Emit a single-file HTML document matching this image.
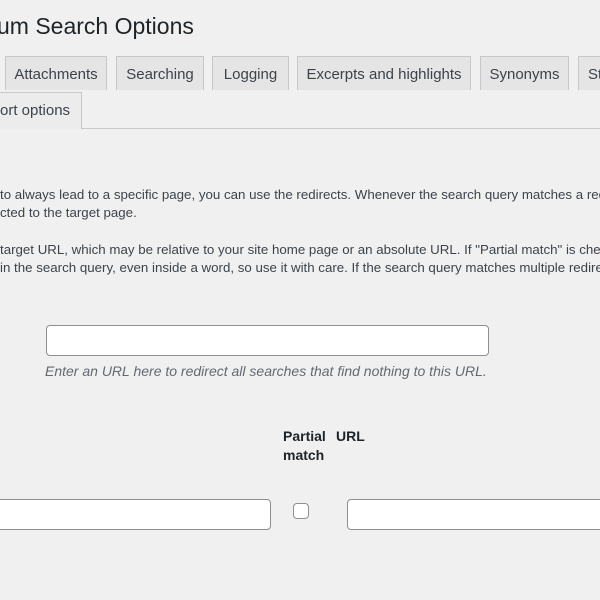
<!DOCTYPE html>
<html><head><meta charset="utf-8"><style>
body{margin:0;width:600px;height:600px;overflow:hidden;background:#f0f0f1;font-family:"Liberation Sans",sans-serif;color:#1d2327;position:relative}
.a{position:absolute;white-space:nowrap}
h1{position:absolute;left:-3px;top:13px;margin:0;font-weight:400;font-size:23px;white-space:nowrap}
.tab{position:absolute;height:34px;background:#e5e5e6;border:1px solid #c8c8ca;border-bottom:none;font-size:15px;line-height:36px;text-align:center;color:#3c434a;box-sizing:border-box}
.p{font-size:13.3px;color:#3c434a}
.in{position:absolute;background:#fff;border:1px solid #8c8f94;border-radius:4px;box-sizing:border-box}
</style></head><body>
<h1>um Search Options</h1>
<div class="tab" style="left:5px;top:56px;width:102px">Attachments</div>
<div class="tab" style="left:116px;top:56px;width:88px">Searching</div>
<div class="tab" style="left:212px;top:56px;width:77px">Logging</div>
<div class="tab" style="left:297px;top:56px;width:174px">Excerpts and highlights</div>
<div class="tab" style="left:480px;top:56px;width:89px">Synonyms</div>
<div class="tab" style="left:578px;top:56px;width:40px;text-align:left;padding-left:9px">St</div>
<div class="tab" style="left:-10px;top:92px;width:92px;height:37px;background:#ececed;text-align:left;padding-left:9px">ort options</div>
<div class="a" style="left:82px;top:128px;width:520px;height:1px;background:#c8c8ca"></div>
<div class="a p" style="left:0;top:187px">to always lead to a specific page, you can use the redirects. Whenever the search query matches a redi</div>
<div class="a p" style="left:0;top:205px">cted to the target page.</div>
<div class="a p" style="left:0;top:242px">target URL, which may be relative to your site home page or an absolute URL. If "Partial match" is chec</div>
<div class="a p" style="left:0;top:260px">in the search query, even inside a word, so use it with care. If the search query matches multiple redire</div>
<div class="in" style="left:46px;top:325px;width:443px;height:31px"></div>
<div class="a" style="left:45px;top:363px;font-size:14px;font-style:italic;color:#646970">Enter an URL here to redirect all searches that find nothing to this URL.</div>
<div class="a" style="left:283px;top:427px;font-size:14px;font-weight:bold;line-height:19px">Partial<br>match</div>
<div class="a" style="left:336px;top:427px;font-size:14px;font-weight:bold;line-height:19px">URL</div>
<div class="in" style="left:-6px;top:499px;width:277px;height:31px"></div>
<div class="in" style="left:293px;top:503px;width:16px;height:16px;border-radius:4px"></div>
<div class="in" style="left:347px;top:499px;width:270px;height:31px"></div>
</body></html>
